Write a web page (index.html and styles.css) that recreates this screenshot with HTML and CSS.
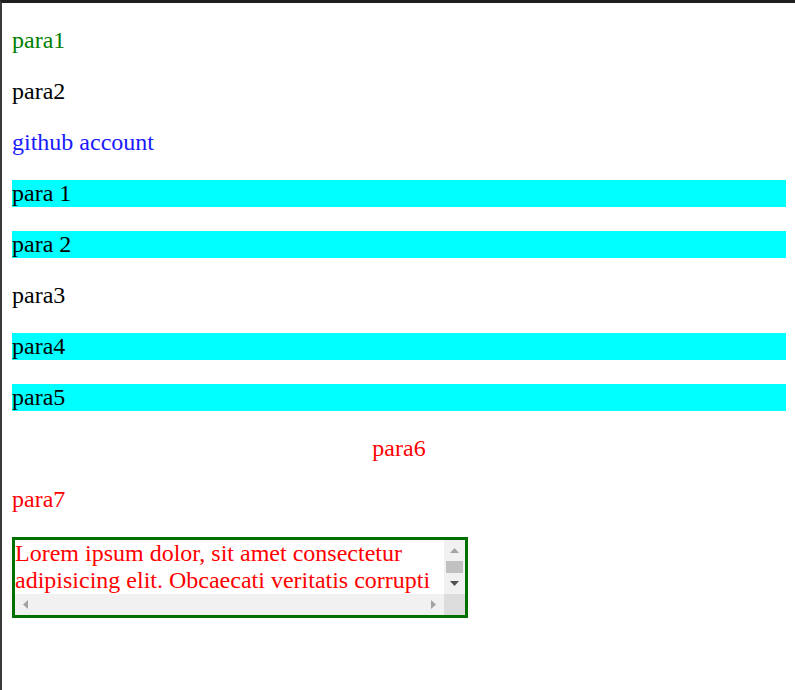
FILE: index.html
```html
<!DOCTYPE html>
<html>
<head>
<meta charset="utf-8">
<title>paras</title>
<link rel="stylesheet" href="styles.css">
</head>
<body>
<p class="green">para1</p>
<p>para2</p>
<p class="blue">github account</p>
<p class="hl">para 1</p>
<p class="hl">para 2</p>
<p>para3</p>
<p class="hl">para4</p>
<p class="hl">para5</p>
<p class="red center">para6</p>
<p class="red">para7</p>
<div class="box">
  <textarea class="text">Lorem ipsum dolor, sit amet consectetur adipisicing elit. Obcaecati veritatis corrupti quas voluptatum, laudantium eveniet reprehenderit, dolorum ipsam nostrum fugiat est tempore.</textarea>
  <div class="vbar">
    <div class="btn"><svg width="9" height="5" viewBox="0 0 9 5"><polygon points="4.5,0 9,5 0,5" fill="#a3a3a3"/></svg></div>
    <div class="thumb"></div>
    <div class="btn"><svg width="9" height="5" viewBox="0 0 9 5"><polygon points="0,0 9,0 4.5,5" fill="#505050"/></svg></div>
  </div>
  <div class="hbar">
    <div class="btn"><svg width="5" height="9" viewBox="0 0 5 9"><polygon points="5,0 5,9 0,4.5" fill="#a3a3a3"/></svg></div>
    <div class="btn"><svg width="5" height="9" viewBox="0 0 5 9"><polygon points="0,0 5,4.5 0,9" fill="#a3a3a3"/></svg></div>
  </div>
  <div class="corner"></div>
</div>
</body>
</html>
```
FILE: styles.css
```css
html, body {
  height: 100%;
}
body {
  margin: 0;
  box-sizing: border-box;
  border-top: 3px solid #1f1f1f;
  border-left: 2px solid #3a3a3a;
  padding: 0 9px 0 10px;
  font-family: "Liberation Serif", "Times New Roman", serif;
  font-size: 24px;
  color: #000;
  background: #fff;
  overflow: hidden;
}
p {
  margin: 24px 0;
}
.green { color: #008000; }
.blue { color: #1a1aff; }
.red { color: #ff0000; }
.center { text-align: center; }
.hl { background: #00ffff; }

.box {
  display: grid;
  grid-template-columns: 429px 21px;
  grid-template-rows: 54px 21px;
  width: 456px;
  box-sizing: border-box;
  border: 3px solid #007000;
}
.text {
  display: block;
  width: 100%;
  height: 100%;
  box-sizing: border-box;
  margin: 0;
  padding: 0;
  border: 0;
  outline: none;
  font-family: "Liberation Serif", "Times New Roman", serif;
  font-size: 24px;
  color: #ff0000;
  background: #fff;
  overflow: hidden;
  resize: none;
}
.vbar {
  display: flex;
  flex-direction: column;
  background: #f1f1f1;
}
.vbar .btn {
  flex: 1;
  display: flex;
  align-items: center;
  justify-content: center;
}
.vbar .thumb {
  height: 12px;
  margin: 0 2px;
  background: #c1c1c1;
}
.hbar {
  display: flex;
  justify-content: space-between;
  background: #f1f1f1;
}
.hbar .btn {
  width: 21px;
  display: flex;
  align-items: center;
  justify-content: center;
}
.btn svg {
  display: block;
}
.corner {
  background: #dcdcdc;
}
```
